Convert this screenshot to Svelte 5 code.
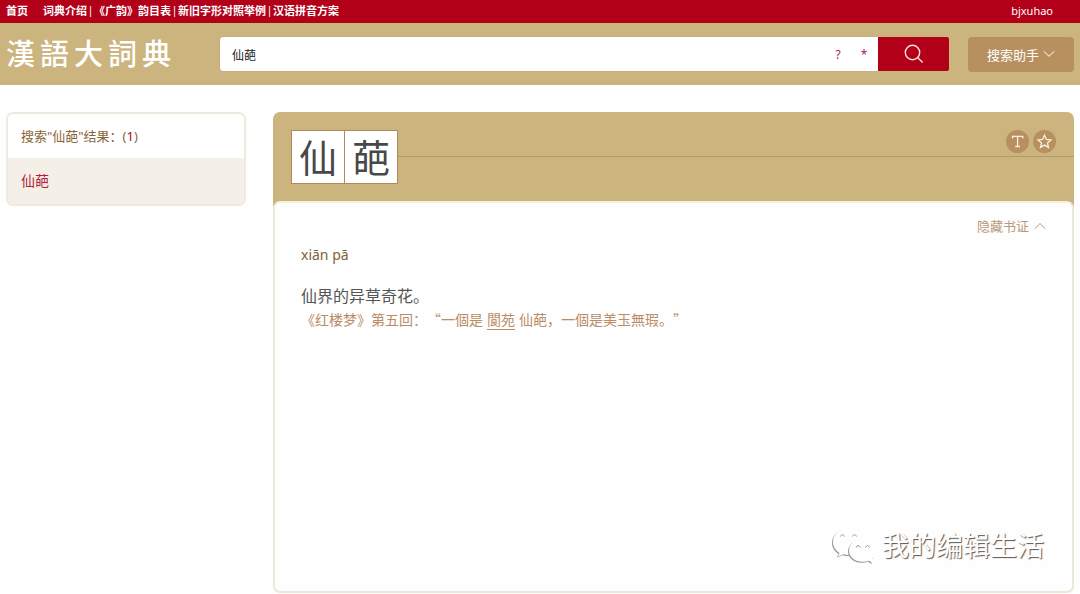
<script lang="ts">
let word = $state("仙葩");
let selected = $state("仙葩");
let showQuotes = $state(true);

const navLinks = ["词典介绍", "《广韵》韵目表", "新旧字形对照举例", "汉语拼音方案"];
const results = ["仙葩"];
const title = "漢語大詞典";

function search(e: SubmitEvent) {
	e.preventDefault();
	selected = word;
}
</script>

<div class="page">
	<nav class="topbar">
		<a class="home" href="#home">首页</a>
		<div class="links">
			{#each navLinks as link, i}
				{#if i > 0}<span class="divider">|</span>{/if}<a href="#page{i}">{link}</a>
			{/each}
		</div>
		<a class="user" href="#user">bjxuhao</a>
	</nav>

	<header class="header">
		<a class="logo" href="#home" aria-label={title}>
			{#each title as char}
				<span>{char}</span>
			{/each}
		</a>
		<form class="search" onsubmit={search}>
			<div class="field">
				<input type="text" aria-label="搜索" bind:value={word} />
				<button class="wildcard" type="button" onclick={() => (word += "?")}>?</button>
				<button class="wildcard" type="button" onclick={() => (word += "*")}>*</button>
			</div>
			<button class="submit" type="submit" aria-label="搜索">
				<svg width="20" height="20" viewBox="0 0 20 20">
					<circle cx="8.5" cy="8.5" r="7.2" />
					<path d="M13.8 13.8L18.7 18.5" />
				</svg>
			</button>
		</form>
		<button class="helper" type="button">
			搜索助手
			<svg width="12" height="8" viewBox="0 0 12 8"><path d="M0.7 1.2L6 6.3L11.3 1.2" /></svg>
		</button>
	</header>

	<div class="content">
		<aside class="results">
			<p class="summary">搜索"仙葩"结果：(<b>{results.length}</b>)</p>
			<ul>
				{#each results as result}
					<li class:active={result === selected}>
						<a href="#{result}" onclick={() => (selected = result)}>{result}</a>
					</li>
				{/each}
			</ul>
		</aside>

		<main class="entry">
			<div class="entry-head">
				<h1>
					{#each selected as char}
						<span>{char}</span>
					{/each}
				</h1>
				<div class="rule"></div>
				<div class="tools">
					<button type="button" aria-label="字体">
						<svg width="23" height="23" viewBox="0 0 23 23">
							<path d="M6.5 8.5V6.3H16.8V8.5M11.6 6.3V16.5M9.3 16.5H14" />
						</svg>
					</button>
					<button type="button" aria-label="收藏">
						<svg width="23" height="23" viewBox="0 0 23 23">
							<path d="M11.5 5.2L13.4 9.4L17.9 9.9L14.5 12.9L15.5 17.4L11.5 15.1L7.5 17.4L8.5 12.9L5.1 9.9L9.6 9.4Z" />
						</svg>
					</button>
				</div>
			</div>

			<div class="entry-body">
				<button class="toggle" type="button" onclick={() => (showQuotes = !showQuotes)}>
					{showQuotes ? "隐藏书证" : "显示书证"}
					<svg class:flipped={!showQuotes} width="12" height="8" viewBox="0 0 12 8"><path d="M0.7 6.7L6 1.5L11.3 6.7" /></svg>
				</button>
				<p class="pinyin">xiān pā</p>
				<p class="meaning">仙界的异草奇花。</p>
				{#if showQuotes}
					<p class="quote" lang="zh-CN">《红楼梦》第五回：“一個是<a href="#閬苑">閬苑</a>仙葩，一個是美玉無瑕。”</p>
				{/if}

				<div class="watermark">
					<svg width="46" height="38" viewBox="0 0 46 38">
						<path class="bubble" d="M17 1C8 1 1 7 1 15C1 19.5 3.5 23.5 7.5 26L6 29.5L11.5 27.2C15 28.3 18 28.3 21 27.8C28 26.5 33 21 33 15C33 7 26 1 17 1Z" />
						<path class="bubble" d="M30.5 12C22.5 12 17 17.5 17 23.5C17 30 23 34.8 30.5 34.8C32.8 34.8 35 34.3 36.8 33.7L41 36L39.8 32C43 29.8 44.5 27 44.5 23.5C44.5 17.5 38.5 12 30.5 12Z" />
						<path class="eye" d="M8.5 9.5Q10.5 5.5 12.5 9.5M20.5 9.5Q22.5 5.5 24.5 9.5M24 20.5Q26 16.5 28 20.5M33.5 20.5Q35.5 16.5 37.5 20.5" />
					</svg>
					<span>我的编辑生活</span>
				</div>
			</div>
		</main>
	</div>
</div>

<style>
	:global(body) {
		background: #fefefe;
	}

	.page {
		display: flex;
		flex-direction: column;
		box-sizing: border-box;
		min-height: 100vh;
		font-family: "Noto Sans", "Noto Sans CJK SC", sans-serif;
		font-size: 12px;
		color: #555;
	}

	a {
		color: inherit;
		text-decoration: none;
	}

	button {
		padding: 0;
		border: none;
		background: none;
		color: inherit;
		font: inherit;
		cursor: pointer;
	}

	p,
	ul,
	h1 {
		margin: 0;
		padding: 0;
	}

	svg {
		fill: none;
		stroke: currentColor;
	}

	.topbar {
		display: flex;
		align-items: center;
		height: 23px;
		padding: 0 27px 3px 6px;
		box-sizing: border-box;
		background: #b30019;
		color: #fff;
		font-size: 11px;
		font-weight: 700;
	}

	.links {
		display: flex;
		margin-left: 15px;
	}

	.divider {
		width: 7px;
		font-weight: 400;
		text-align: center;
	}

	.user {
		margin-left: auto;
		font-weight: 400;
	}

	.header {
		display: flex;
		align-items: center;
		height: 62px;
		padding: 0 6px;
		background: #ccb47f;
	}

	.logo {
		display: flex;
		gap: 5px;
		margin-right: 49px;
		padding-bottom: 4px;
		color: #fff;
		font-family: "Noto Sans CJK TC", sans-serif;
		font-size: 29px;
		font-weight: 500;
		line-height: 40px;
	}

	.search {
		display: flex;
		flex: 1;
		height: 34px;
	}

	.field {
		display: flex;
		flex: 1;
		align-items: center;
		background: #fff;
		border-radius: 3px 0 0 3px;
		box-shadow: 0 0 1px #8d7c58;
	}

	.field input {
		flex: 1;
		min-width: 0;
		height: 100%;
		box-sizing: border-box;
		padding: 2px 12px 0;
		border: none;
		outline: none;
		background: none;
		color: #222;
		font: inherit;
	}

	.wildcard {
		width: 26px;
		color: #b32050;
	}

	.wildcard:last-child {
		margin-right: 1px;
	}

	.submit {
		display: grid;
		place-items: center;
		width: 71px;
		border-radius: 0 2px 2px 0;
		background: #b30019;
		color: #fbe3e0;
	}

	.submit svg {
		stroke-width: 1.4;
	}

	.helper {
		display: flex;
		align-items: center;
		justify-content: center;
		gap: 4px;
		width: 106px;
		height: 35px;
		margin-left: 19px;
		border-radius: 4px;
		background: #b89060;
		color: #fff;
		font-size: 13px;
	}

	.content {
		display: flex;
		flex: 1;
		align-items: stretch;
		gap: 27px;
		padding: 27px 6px 1px;
	}

	.results {
		align-self: flex-start;
		width: 240px;
		box-sizing: border-box;
		border: 2px solid #eeeadf;
		border-radius: 7px;
		overflow: hidden;
		background: #fff;
	}

	.summary {
		padding: 0 13px;
		color: #8a6536;
		font-size: 13px;
		line-height: 44px;
	}

	.summary b {
		color: #b30019;
		font-weight: 400;
	}

	ul {
		list-style: none;
	}

	li {
		padding: 0 13px;
		color: #8a6536;
		font-size: 14px;
		line-height: 46px;
	}

	li.active {
		background: #f4f0e8;
		color: #b51f3d;
	}

	.entry {
		display: flex;
		flex: 1;
		flex-direction: column;
		min-width: 0;
		border-radius: 7px;
		background: linear-gradient(#ccb47f 94px, transparent 94px);
	}

	.entry-head {
		display: flex;
		align-items: center;
		height: 89px;
		padding-left: 18px;
	}

	h1 {
		display: flex;
		gap: 1px;
		border: 1px solid #b08a5c;
		background: #b08a5c;
		color: #484848;
		font-size: 38px;
		font-weight: 400;
		line-height: 52px;
	}

	h1 span {
		width: 52px;
		height: 52px;
		background: #fff;
		text-align: center;
	}

	.rule {
		flex: 1;
		border-top: 1px solid #b39a68;
	}

	.tools {
		display: flex;
		align-self: flex-start;
		gap: 4px;
		width: 68px;
		height: 45px;
		padding-top: 18px;
		box-sizing: border-box;
		border-bottom: 1px solid #b39a68;
	}

	.tools button {
		width: 23px;
		height: 23px;
		border-radius: 50%;
		background: #b89060;
		color: #fbf0e0;
	}

	.tools svg {
		display: block;
		stroke-width: 1.3;
	}

	.entry-body {
		position: relative;
		flex: 1;
		padding: 14px 26px;
		border: 2px solid #ebe8d9;
		border-top-color: #f6efdc;
		border-radius: 7px;
		background: #fefefe;
	}

	.toggle {
		display: flex;
		align-items: center;
		gap: 5px;
		margin-left: auto;
		color: #b89878;
		font-size: 13px;
		line-height: 18px;
	}

	.pinyin {
		margin-top: 8px;
		color: #826138;
		font-size: 14px;
		line-height: 24px;
	}

	.meaning {
		margin-top: 17px;
		font-size: 16px;
		line-height: 24px;
	}

	.quote {
		color: #ba8c66;
		font-family: "Noto Sans CJK SC", sans-serif;
		font-size: 14px;
		line-height: 22px;
		text-spacing-trim: space-all;
	}

	.quote a {
		margin: 0 4px;
		border-bottom: 1px solid #ba8c66;
	}

	.flipped {
		transform: rotate(180deg);
	}

	.watermark {
		position: absolute;
		right: 28px;
		bottom: 25px;
		display: flex;
		align-items: center;
		gap: 4px;
		color: #fff;
		font-size: 27px;
		line-height: 40px;
		text-shadow: 1px 1px 1px #555;
	}

	.watermark svg {
		stroke: none;
	}

	.watermark .bubble {
		fill: #fefefe;
		filter: drop-shadow(-1px 1px 0.5px #999);
	}

	.watermark .eye {
		stroke: #999;
		stroke-width: 1;
	}
</style>
